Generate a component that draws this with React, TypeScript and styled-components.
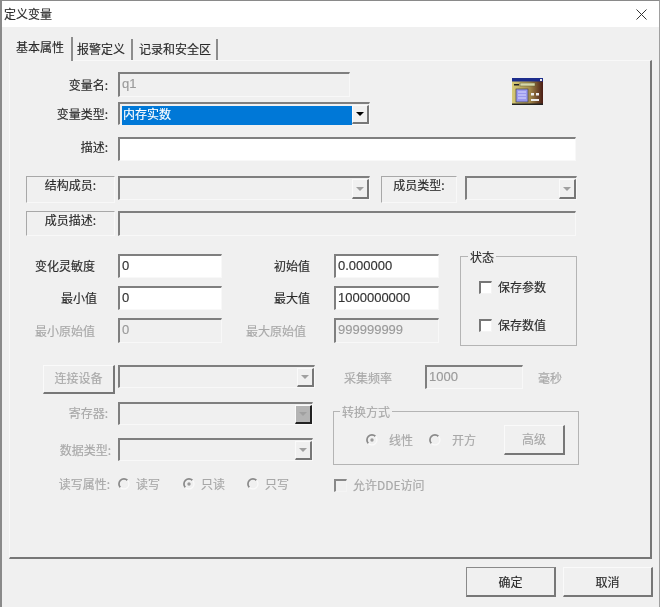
import React from "react";
import styled, { createGlobalStyle } from "styled-components";

const Global = createGlobalStyle`
  html, body { margin: 0; padding: 0; background: #f0f0f0; }
  * { box-sizing: border-box; }
`;

const DIS = "#a8a8a8";
const INK = "#2a2a2a";

const Win = styled.div`
  width: 660px; height: 607px; overflow: hidden; position: relative;
  background: #f0f0f0; color: ${INK};
  font: 12px/14px "Noto Sans CJK SC", "Liberation Sans", sans-serif;
  -webkit-text-stroke: 0.15px currentColor;
  border-top: 1px solid #8a8a8a; border-left: 2px solid #8a8a8a; border-right: 1px solid #a0a0a0;
  filter: blur(0.4px);
`;
const TitleBar = styled.div`
  height: 26px; background: #fff; display: flex; align-items: center; justify-content: space-between;
  padding: 0 12px 0 2px; font-size: 12px;
`;
const TabStrip = styled.div`
  height: 33px; padding-left: 8px; display: flex; align-items: flex-end;
`;
const Tab = styled.div<{ $active?: boolean; $w: number; $pl: number }>`
  width: ${p => p.$w}px; height: ${p => (p.$active ? 24 : 21)}px; margin-bottom: ${p => (p.$active ? -1 : 0)}px;
  padding: 3px 0 0 ${p => p.$pl}px;
  border-right: 2px solid #8c8c8c; font-size: 12px; position: relative; z-index: 1;
  background: #f0f0f0;
`;
const Panel = styled.div`
  margin-left: 7px; width: 643px; height: 499px;
  border-top: 1px solid #f8f8f8; border-left: 1px solid #f8f8f8;
  border-right: 2px solid #777; border-bottom: 2px solid #777;
  padding-top: 11px; display: flex; flex-direction: column;
`;
const Row = styled.div<{ $mt?: number; $h: number }>`
  display: flex; align-items: flex-start; height: ${p => p.$h}px; margin-top: ${p => p.$mt ?? 0}px;
`;
const Label = styled.div<{ $w?: number; $pr?: number; $dis?: boolean; $y?: number }>`
  width: ${p => p.$w ?? 108}px; flex: none; text-align: right; padding-right: ${p => p.$pr ?? 10}px;
  padding-top: ${p => p.$y ?? 5}px; white-space: nowrap;
  color: ${p => (p.$dis ? DIS : INK)};
`;
const Sunken = styled.div<{ $w: number; $h: number; $white?: boolean; $ml?: number; $dis?: boolean }>`
  flex: none; width: ${p => p.$w}px; height: ${p => p.$h}px; margin-left: ${p => p.$ml ?? 0}px;
  border-top: 2px solid #7f7f7f; border-left: 2px solid #7f7f7f;
  border-right: 1px solid #f8f8f8; border-bottom: 1px solid #f8f8f8;
  background: ${p => (p.$white ? "#fff" : "#f0f0f0")};
  font: 13px/18px "Liberation Sans", sans-serif; padding: 1px 0 0 2px;
  color: ${p => (p.$dis ? "#9a9a9a" : "#333")};
  position: relative; display: flex;
`;
const Selection = styled.div`
  flex: 1; background: #0078d7; color: #fff; font: 12px/15px "Noto Sans CJK SC", sans-serif; padding-left: 1px; margin: 1px 17px 0 0; height: 19px;
`;
const ArrowBtn = styled.div<{ $dark?: boolean }>`
  position: absolute; right: 0; top: 1px; bottom: 0; width: 17px;
  background: ${p => (p.$dark ? "#b4b4b4" : "#f0f0f0")};
  border-right: 2px solid ${p => (p.$dark ? "#222" : "#777")}; border-bottom: 2px solid ${p => (p.$dark ? "#222" : "#777")};
  border-top: 1px solid #fafafa; border-left: 1px solid #fafafa;
  display: flex; align-items: center; justify-content: center;
`;
const Tri = styled.div<{ $dis?: boolean }>`
  width: 0; height: 0; border-left: 4px solid transparent; border-right: 4px solid transparent;
  border-top: 4px solid ${p => (p.$dis ? "#a0a0a0" : "#000")};
`;
const BoxLabel = styled.div<{ $w: number; $ml: number; $h: number }>`
  flex: none; width: ${p => p.$w}px; height: ${p => p.$h}px; margin-left: ${p => p.$ml}px;
  border-top: 1px solid #a8a8a8; border-left: 1px solid #a8a8a8;
  border-right: 1px solid #f8f8f8; border-bottom: 1px solid #f8f8f8;
  text-align: center; padding-top: 1px; font-size: 12px;
`;
const Mid = styled.div`
  display: flex; align-items: flex-start; margin-top: 18px; height: 92px;
`;
const FieldGrid = styled.div`
  display: grid; grid-template-columns: 108px 104px 112px 105px; grid-template-rows: 24px 24px 25px; row-gap: 8px;
  flex: none;
`;
const Group = styled.div<{ $w: number; $h: number; $ml?: number; $mt?: number }>`
  flex: none; position: relative; width: ${p => p.$w}px; height: ${p => p.$h}px;
  margin-left: ${p => p.$ml ?? 0}px; margin-top: ${p => p.$mt ?? 0}px;
  border: 1px solid #b4b4b4;
`;
const Legend = styled.div<{ $dis?: boolean; $x: number }>`
  position: absolute; left: ${p => p.$x}px; top: -7px; padding: 0 2px; background: #f0f0f0;
  color: ${p => (p.$dis ? DIS : INK)};
`;
const StateList = styled.div`
  display: flex; flex-direction: column; gap: 22px; padding: 22px 0 0 18px;
`;
const CheckRow = styled.div<{ $dis?: boolean }>`
  display: flex; align-items: center; gap: 6px; height: 16px; color: ${p => (p.$dis ? DIS : INK)};
`;
const CheckBox = styled.div<{ $dis?: boolean }>`
  width: 13px; height: 13px; flex: none; background: ${p => (p.$dis ? "#f0f0f0" : "#fff")};
  border-top: 2px solid ${p => (p.$dis ? "#888" : "#777")}; border-left: 2px solid ${p => (p.$dis ? "#888" : "#777")};
  border-right: 1px solid #f4f4f4; border-bottom: 1px solid #f4f4f4;
`;
const RaisedBtn = styled.div<{ $w: number; $h: number; $dis?: boolean }>`
  flex: none; width: ${p => p.$w}px; height: ${p => p.$h}px; padding-bottom: 2px;
  border-top: 1px solid #fafafa; border-left: 1px solid #fafafa;
  border-right: 2px solid #777; border-bottom: 2px solid #777;
  display: flex; align-items: center; justify-content: center;
  color: ${p => (p.$dis ? DIS : INK)};
`;
const Plain = styled.div<{ $ml: number; $dis?: boolean }>`
  flex: none; margin-left: ${p => p.$ml}px; padding-top: 6px; white-space: nowrap;
  color: ${p => (p.$dis ? DIS : INK)};
`;
const TwoCol = styled.div`
  display: flex; align-items: flex-start; margin-top: 8px; height: 63px;
`;
const LeftCol = styled.div`
  width: 323px; flex: none; display: flex; flex-direction: column; gap: 13px;
`;
const RadioRow = styled.div`
  display: flex; align-items: center; height: 14px;
`;
const RadioItem = styled.div<{ $w: number; $gap?: number }>`
  width: ${p => p.$w}px; flex: none; display: flex; align-items: center; gap: ${p => p.$gap ?? 6}px; color: ${DIS}; white-space: nowrap;
`;
const Convert = styled.div`
  display: flex; align-items: center; height: 100%; padding: 4px 0 0 32px;
`;
const Footer = styled.div`
  display: flex; justify-content: flex-end; gap: 7px; padding: 8px 6px 0 0;
`;
const DialogBtn = styled.div<{ $def?: boolean }>`
  width: 90px; height: 30px; display: flex; align-items: center; justify-content: center;
  border-top: ${p => (p.$def ? "1px solid #8a8a8a" : "1px solid #fafafa")};
  border-left: ${p => (p.$def ? "1px solid #8a8a8a" : "1px solid #fafafa")};
  border-right: 2px solid #777; border-bottom: 2px solid #777;
`;
const IconSlot = styled.div`
  margin: 6px 0 0 162px; flex: none; height: 27px;
`;
const Spacer = styled.div<{ $w: number }>`
  flex: none; width: ${p => p.$w}px;
`;

const Radio = ({ on }: { on?: boolean }) => (
  <svg width="12" height="12" viewBox="0 0 12 12">
    <path d="M9.5 2.4A5 5 0 0 0 2.4 9.5" fill="none" stroke="#8a8a8a" strokeWidth="1.7" />
    <path d="M2.4 9.5A5 5 0 0 0 9.5 2.4" fill="none" stroke="#fafafa" strokeWidth="1.2" />
    {on && <circle cx="6" cy="6" r="1.7" fill="#9a9a9a" />}
  </svg>
);

const Close = () => (
  <svg width="11" height="11" viewBox="0 0 11 11">
    <path d="M.5.5l10 10M10.5.5l-10 10" stroke="#333" strokeWidth="1" fill="none" />
  </svg>
);

const VarIcon = () => (
  <svg width="31" height="27" viewBox="0 0 31 27">
    <defs>
      <linearGradient id="bg" x1="0" x2="1" y1="0" y2="0">
        <stop offset="0" stopColor="#d8cc78" />
        <stop offset=".55" stopColor="#a8904e" />
        <stop offset="1" stopColor="#4a1c14" />
      </linearGradient>
    </defs>
    <rect x="0" y="0" width="31" height="27" fill="url(#bg)" />
    <rect x="0" y="0" width="31" height="3.5" fill="#1c2c8c" />
    <rect x="28" y="1" width="2" height="2" fill="#e8e8e8" />
    <rect x="2" y="6" width="5" height="1.5" fill="#222" />
    <rect x="8" y="5" width="15" height="3" fill="#d8d8a8" stroke="#5a5a30" strokeWidth=".5" />
    <rect x="4" y="11" width="12" height="13" fill="#9a98ee" stroke="#444" strokeWidth=".7" />
    <path d="M6 14h8M6 17h8M6 20h8" stroke="#dcdcff" strokeWidth="1" />
    <rect x="19" y="15" width="3" height="2.5" fill="#eee" />
    <rect x="24" y="15" width="3" height="2.5" fill="#eee" />
    <rect x="19" y="21" width="8" height="2" fill="#eee" />
    <rect x="0" y="25.5" width="31" height="1.5" fill="#222" />
  </svg>
);

const Select = ({ w, h, dis = true, dark, children }: { w: number; h: number; dis?: boolean; dark?: boolean; children?: React.ReactNode }) => (
  <Sunken $w={w} $h={h}>
    {children}
    <ArrowBtn $dark={dark}><Tri $dis={dis} /></ArrowBtn>
  </Sunken>
);

export default function App() {
  return (
    <Win>
      <Global />
      <TitleBar>定义变量<Close /></TitleBar>
      <TabStrip>
        <Tab $active $w={63} $pl={6}>基本属性</Tab>
        <Tab $w={60} $pl={4}>报警定义</Tab>
        <Tab $w={85} $pl={6}>记录和安全区</Tab>
      </TabStrip>
      <Panel>
        <Row $h={25}>
          <Label $dis={false} $y={6}>变量名:</Label>
          <Sunken $w={232} $h={25} $dis>q1</Sunken>
          <IconSlot><VarIcon /></IconSlot>
        </Row>
        <Row $h={23} $mt={5}>
          <Label $y={5}>变量类型:</Label>
          <Select w={252} h={23} dis={false}><Selection>内存实数</Selection></Select>
        </Row>
        <Row $h={24} $mt={12}>
          <Label $y={3}>描述:</Label>
          <Sunken $w={458} $h={24} $white />
        </Row>
        <Row $h={27} $mt={15}>
          <BoxLabel $w={89} $ml={16} $h={27}>结构成员:</BoxLabel>
          <Spacer $w={3} />
          <Select w={252} h={24} />
          <BoxLabel $w={76} $ml={11} $h={27}>成员类型:</BoxLabel>
          <Spacer $w={8} />
          <Select w={112} h={24} />
        </Row>
        <Row $h={25} $mt={8}>
          <BoxLabel $w={89} $ml={16} $h={25}>成员描述:</BoxLabel>
          <Spacer $w={3} />
          <Sunken $w={458} $h={25} />
        </Row>
        <Mid>
          <FieldGrid>
            <Label $pr={23}>变化灵敏度</Label>
            <Sunken $w={104} $h={24} $white>0</Sunken>
            <Label $w={112} $pr={24}>初始值</Label>
            <Sunken $w={105} $h={24} $white>0.000000</Sunken>
            <Label $pr={21}>最小值</Label>
            <Sunken $w={104} $h={24} $white>0</Sunken>
            <Label $w={112} $pr={24}>最大值</Label>
            <Sunken $w={105} $h={24} $white>1000000000</Sunken>
            <Label $pr={23} $y={6} $dis>最小原始值</Label>
            <Sunken $w={104} $h={25} $dis>0</Sunken>
            <Label $w={112} $pr={28} $y={6} $dis>最大原始值</Label>
            <Sunken $w={105} $h={25} $dis>999999999</Sunken>
          </FieldGrid>
          <Group $w={117} $h={90} $ml={21} $mt={2}>
            <Legend $x={7}>状态</Legend>
            <StateList>
              <CheckRow><CheckBox />保存参数</CheckRow>
              <CheckRow><CheckBox />保存数值</CheckRow>
            </StateList>
          </Group>
        </Mid>
        <Row $h={29} $mt={19}>
          <Spacer $w={33} />
          <RaisedBtn $w={72} $h={29} $dis>连接设备</RaisedBtn>
          <Spacer $w={3} />
          <Select w={197} h={23} />
          <Plain $ml={29} $dis>采集频率</Plain>
          <Spacer $w={33} />
          <Sunken $w={98} $h={24} $dis>1000</Sunken>
          <Plain $ml={15} $dis>毫秒</Plain>
        </Row>
        <TwoCol>
          <LeftCol>
            <Row $h={23}>
              <Label $dis $y={4}>寄存器:</Label>
              <Select w={195} h={23} dark />
            </Row>
            <Row $h={23}>
              <Label $dis $pr={7}>数据类型:</Label>
              <Select w={195} h={23} />
            </Row>
          </LeftCol>
          <Group $w={246} $h={54} $mt={9}>
            <Legend $dis $x={6}>转换方式</Legend>
            <Convert>
              <RadioItem $w={63} $gap={11}><Radio on />线性</RadioItem>
              <RadioItem $w={75} $gap={11}><Radio />开方</RadioItem>
              <RaisedBtn $w={61} $h={30} $dis>高级</RaisedBtn>
            </Convert>
          </Group>
        </TwoCol>
        <Row $h={14} $mt={12}>
          <Label $dis $pr={8} $y={0}>读写属性:</Label>
          <RadioRow>
            <RadioItem $w={65}><Radio />读写</RadioItem>
            <RadioItem $w={64}><Radio on />只读</RadioItem>
            <RadioItem $w={87}><Radio />只写</RadioItem>
          </RadioRow>
          <CheckRow $dis><CheckBox $dis />允许DDE访问</CheckRow>
        </Row>
      </Panel>
      <Footer>
        <DialogBtn $def>确定</DialogBtn>
        <DialogBtn>取消</DialogBtn>
      </Footer>
    </Win>
  );
}
